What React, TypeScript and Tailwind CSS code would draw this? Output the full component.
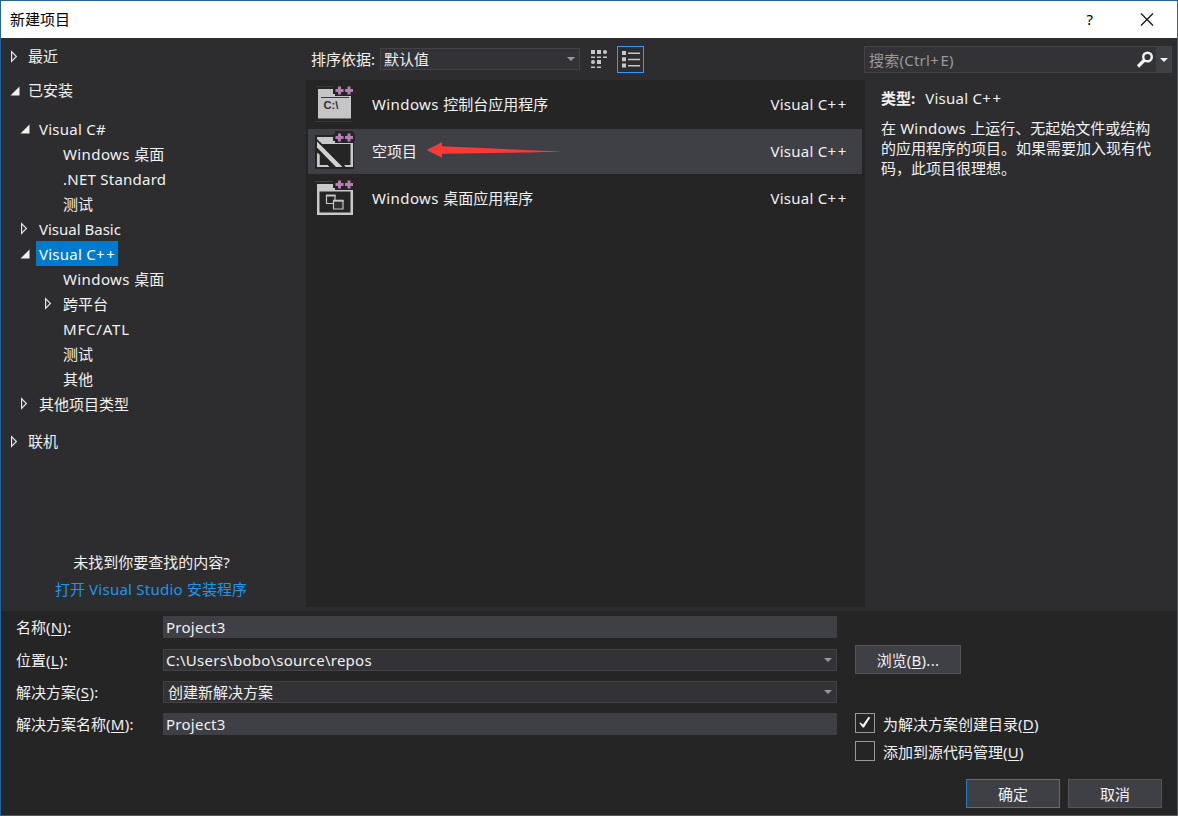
import type { ReactNode } from "react";

type Arrow = "open" | "closed" | "none";

type TreeItem = {
  label: string;
  arrow: Arrow;
  indent: string;
  selected?: boolean;
};

const treeItems: TreeItem[] = [
  { label: "Visual C#", arrow: "open", indent: "pl-[17px]" },
  { label: "Windows 桌面", arrow: "none", indent: "pl-[41px]" },
  { label: ".NET Standard", arrow: "none", indent: "pl-[41px]" },
  { label: "测试", arrow: "none", indent: "pl-[41px]" },
  { label: "Visual Basic", arrow: "closed", indent: "pl-[17px]" },
  { label: "Visual C++", arrow: "open", indent: "pl-[17px]", selected: true },
  { label: "Windows 桌面", arrow: "none", indent: "pl-[41px]" },
  { label: "跨平台", arrow: "closed", indent: "pl-[41px]" },
  { label: "MFC/ATL", arrow: "none", indent: "pl-[41px]" },
  { label: "测试", arrow: "none", indent: "pl-[41px]" },
  { label: "其他", arrow: "none", indent: "pl-[41px]" },
  { label: "其他项目类型", arrow: "closed", indent: "pl-[17px]" },
];

const templates = [
  { name: "Windows 控制台应用程序", icon: <ConsoleIcon /> },
  { name: "空项目", icon: <EmptyIcon />, selected: true },
  { name: "Windows 桌面应用程序", icon: <DesktopIcon /> },
];

function tracking(run: string) {
  if (run.startsWith("+")) return "tracking-[1.7px]";
  if (run === "MFC/ATL") return "tracking-[0.8px]";
  if (run === "Visual Basic") return "tracking-[0px]";
  if (run.startsWith("Windows")) return "tracking-[0.4px]";
  if (/[\x21-\x7e]/.test(run)) return "tracking-[0.25px]";
  return "";
}

// Latin runs get a touch of tracking, Chinese runs stay on the em grid
function Label({ children }: { children: string }) {
  const runs = children.match(/\++|[\x20-\x2a\x2c-\x7e]+|[^\x20-\x7e]+/g) ?? [];
  return (
    <span className="whitespace-pre">
      {runs.map((run, i) => (
        <span key={i} className={tracking(run)}>
          {run}
        </span>
      ))}
    </span>
  );
}

function Mnemonic({ text, letter, tail = "" }: { text: string; letter: string; tail?: string }) {
  return (
    <span className="whitespace-pre">
      {text}
      <span className="tracking-[0.3px]">
        (<span className="underline decoration-1 underline-offset-2">{letter}</span>){tail}
      </span>
    </span>
  );
}

function TreeArrow({ type }: { type: Arrow }) {
  return (
    <svg width="12" height="14" viewBox="0 0 12 14" className="shrink-0">
      {type === "open" && <path d="M11.5 2.5v9H2.5z" fill="#f1f1f1" />}
      {type === "closed" && (
        <path d="M3.6 1.6v9.8L8.4 6.5z" fill="none" stroke="#e6e6e6" strokeWidth="1.2" />
      )}
    </svg>
  );
}

function Caret({ color = "#999999" }: { color?: string }) {
  return (
    <svg width="8" height="4" viewBox="0 0 8 4" className="shrink-0">
      <path d="M0 0h8L4 4z" fill={color} />
    </svg>
  );
}

function PlusPlus() {
  return (
    <>
      <path d="M25 2h18v3h2v7h-2v2H25v-2h-2V5h2z" fill="#252526" />
      <path
        d="M28 4.5h3V7h2.5v3H31v2.5h-3V10h-2.5V7H28zM37.5 4.5h3V7H43v3h-2.5v2.5h-3V10H35V7h2.5z"
        fill="#b57fb6"
      />
    </>
  );
}

function ConsoleIcon() {
  return (
    <svg width="48" height="45" viewBox="0 0 48 45">
      <path d="M8 7h17v6h16v23.5H8z" fill="#c5c5c8" />
      <path d="M11 15.5h28" stroke="#3c3c3f" />
      <path d="M6 4.5h17M5 39.5h37" stroke="#39393b" />
      <text x="13.5" y="27" fontSize="10" fontWeight="700" fontFamily="Liberation Sans" fill="#303033" textLength="15" lengthAdjust="spacingAndGlyphs">
        C:\
      </text>
      <PlusPlus />
    </svg>
  );
}

function EmptyIcon() {
  return (
    <svg width="48" height="45" viewBox="0 0 48 45">
      <path d="M5 6h20V3h19v37H5z" fill="#252526" />
      <path d="M7 8h18v5h18v25H7z" fill="#c9c9cc" />
      <path d="M9.5 15h31v21h-31z" fill="#252526" />
      <path d="M7 10l30 29H20L7 24z" fill="#252526" />
      <path d="M7 12.5L32.5 38H26L7 18.5z" fill="#d2d2d5" />
      <path d="M7 24v14h12.5L17 36H9.500V25z" fill="#c9c9cc" />
      <path d="M7 8h18v5H10z" fill="#c9c9cc" />
      <PlusPlus />
    </svg>
  );
}

function DesktopIcon() {
  return (
    <svg width="48" height="45" viewBox="0 0 48 45">
      <path d="M5 5.500h18" stroke="#444447" />
      <path d="M7 8h18v5h18v26H7z" fill="#c9c9cc" />
      <path d="M9.500 15.500h31v21h-31z" fill="#252526" />
      <path d="M16.500 19.500h8.500v8h-8.500z" fill="none" stroke="#c5c5c8" strokeWidth="1.2" />
      <path d="M16 19.500h9.500" stroke="#c5c5c8" strokeWidth="2" />
      <path d="M23.500 24.500h9.500v8.500h-9.500z" fill="#303033" stroke="#c5c5c8" strokeWidth="1.2" />
      <path d="M23 24.700h10.500" stroke="#c5c5c8" strokeWidth="2" />
      <PlusPlus />
    </svg>
  );
}

function TitleBar() {
  return (
    <header className="flex h-[37px] items-center bg-white pr-[23px] pl-[9px] text-black">
      <span className="grow pb-[2px]">新建项目</span>
      <span className="mr-[47px] pb-[2px]">?</span>
      <svg width="14" height="14" viewBox="0 0 14 14">
        <path d="M1 0.500l12 12M13 0.500l-12 12" stroke="#111" strokeWidth="1.2" />
      </svg>
    </header>
  );
}

function Root({ label, arrow }: { label: string; arrow: Arrow }) {
  return (
    <div className="flex h-[34px] items-center gap-[8px] pl-[7px]">
      <TreeArrow type={arrow} />
      <span className="pb-[2px]">{label}</span>
    </div>
  );
}

function Sidebar() {
  return (
    <nav className="flex w-[305px] shrink-0 flex-col pt-[2px]">
      <Root label="最近" arrow="closed" />
      <Root label="已安装" arrow="open" />
      <div className="pt-[8px]">
        {treeItems.map((item, i) => (
          <div key={i} className={`flex h-[25px] items-center gap-[6px] ${item.indent}`}>
            <TreeArrow type={item.arrow} />
            <span
              className={`flex h-[25px] items-center pr-[1px] pl-[3px] ${item.selected ? "bg-[#007acc] text-white" : ""}`}
            >
              <Label>{item.label}</Label>
            </span>
          </div>
        ))}
      </div>
      <div className="pt-[9px]">
        <Root label="联机" arrow="closed" />
      </div>
      <div className="mt-auto flex flex-col items-center pr-[4px] pb-[8px]">
        <span className="leading-[27px]">未找到你要查找的内容?</span>
        <a className="mr-[1px] leading-[27px] text-[#1c97ea]">
          <Label>打开 Visual Studio 安装程序</Label>
        </a>
      </div>
    </nav>
  );
}

function SortBar() {
  return (
    <div className="flex h-[42px] items-center pl-[5px]">
      <span className="w-[69px]">排序依据:</span>
      <div className="flex h-[22px] w-[200px] items-center justify-between border border-[#434346] bg-[#333337] pr-[4px] pl-[3px]">
        <span>默认值</span>
        <Caret />
      </div>
      <svg width="18" height="20" viewBox="0 0 18 20" className="ml-[10px]" fill="#c8c8c8">
        <path d="M1 1h4v4H1zM7 1h4v4H7zM1 7.500h4v1.400H1zM7 7.500h4v1.400H7zM13 7.500h4v1.400h-4zM7 11h4v4H7zM1 17.500h4v1.400H1zM7 17.500h4v1.400H7z" />
        <circle cx="15" cy="3" r="2" />
        <circle cx="3" cy="13" r="2" />
      </svg>
      <div className="ml-[9px] flex h-[27px] w-[27px] items-center justify-center border border-[#3399ff]">
        <svg width="18" height="17" viewBox="0 0 18 17" fill="#c8c8c8">
          <path d="M0 0h4v4H0zM0 6.300h4v4H0zM0 12.600h4v4H0zM6 1.500h12v1.400H6zM6 7.800h12v1.400H6zM6 14h12v1.400H6z" />
        </svg>
      </div>
    </div>
  );
}

function TemplateList() {
  return (
    <section className="flex w-[559px] shrink-0 flex-col">
      <SortBar />
      <ul className="relative h-[527px] bg-[#252526] pt-[2px] pr-[3px] pl-[2px]">
        {templates.map((t) => (
          <li
            key={t.name}
            className={`mb-[2px] flex h-[45px] items-center pr-[14px] pl-[2px] ${t.selected ? "bg-[#3f3f46]" : ""}`}
          >
            {t.icon}
            <span className="ml-[14px] grow pb-[2px]">
              <Label>{t.name}</Label>
            </span>
            <span className="pb-[2px]">
              <Label>Visual C++</Label>
            </span>
          </li>
        ))}
        {/* pointer drawn over the selected row */}
        <svg width="138" height="18" viewBox="0 0 138 18" className="absolute top-[62px] left-[120px]">
          <path d="M0.5 8L16 0.200v4C60 6 105 8.600 136 9.500 105 10.600 60 11.200 16 11.800v4z" fill="#f93a37" />
        </svg>
      </ul>
    </section>
  );
}

function Details() {
  return (
    <aside className="grow">
      <div className="mt-[8px] mr-[5px] ml-[-1px] flex h-[27px] border border-[#434346] bg-[#333337]">
        <div className="flex grow items-center justify-between pr-[2px] pl-[4px] text-[#999999]">
          <span className="tracking-[0.2px]">
            <Label>搜索(Ctrl+E)</Label>
          </span>
          <svg width="18" height="18" viewBox="0 0 18 18">
            <circle cx="11.500" cy="6" r="4.300" fill="none" stroke="#f1f1f1" strokeWidth="2.400" />
            <path d="M8.500 9L2 15.500" stroke="#f1f1f1" strokeWidth="3.200" />
          </svg>
        </div>
        <div className="flex w-[15px] items-center justify-center bg-[#3f3f46]">
          <Caret color="#f1f1f1" />
        </div>
      </div>
      <div className="pt-[14px] pl-[16px]">
        <p className="leading-[22px]">
          <span className="mr-[10px] font-bold">类型:</span>
          <Label>Visual C++</Label>
        </p>
        <p className="mt-[9px] w-[280px] leading-[20px]">
          <Label>在 Windows 上运行、无起始文件或结构</Label>
          <br />
          的应用程序的项目。如果需要加入现有代
          <br />
          码，此项目很理想。
        </p>
      </div>
    </aside>
  );
}

function Field({ label, value, combo, inset = "pl-[2px]" }: { label: ReactNode; value: string; combo?: boolean; inset?: string }) {
  return (
    <div className="flex items-center">
      <span className="w-[147px]">{label}</span>
      <div
        className={`flex h-[22px] w-[674px] items-center justify-between border pr-[4px] ${inset} ${combo ? "border-[#434346] bg-[#333337]" : "border-[#3f3f46] bg-[#3f3f46]"}`}
      >
        <Label>{value}</Label>
        {combo && <Caret />}
      </div>
    </div>
  );
}

function Check({ label, letter, checked }: { label: string; letter: string; checked?: boolean }) {
  return (
    <div className="flex h-[28px] items-center gap-[8px]">
      <span className="flex h-[20px] w-[20px] items-center justify-center border border-[#999999]">
        {checked && (
          <svg width="14" height="14" viewBox="0 0 14 14">
            <path d="M2 6.200l3 2.200L10.500 0.800l1.800 0.600L6 11.500H4.600L1.500 7.200z" fill="#f1f1f1" />
          </svg>
        )}
      </span>
      <span className="pt-[2px]">
        <Mnemonic text={label} letter={letter} />
      </span>
    </div>
  );
}

function Footer() {
  return (
    <footer className="flex h-[204px] bg-[#252526] pl-[15px]">
      <div className="flex flex-col pt-[5px]">
        <Field label={<Mnemonic text="名称" letter="N" tail=":" />} value="Project3" />
        <div className="h-[11px]" />
        <Field label={<Mnemonic text="位置" letter="L" tail=":" />} value="C:\Users\bobo\source\repos" combo />
        <div className="h-[10px]" />
        <Field label={<Mnemonic text="解决方案" letter="S" tail=":" />} value="创建新解决方案" combo inset="pl-[4px]" />
        <div className="h-[10px]" />
        <Field label={<Mnemonic text="解决方案名称" letter="M" tail=":" />} value="Project3" />
      </div>
      <div className="flex grow flex-col pt-[34px] pl-[18px]">
        <button className="h-[29px] w-[106px] border border-[#555555] bg-[#3f3f46]">
          <Mnemonic text="浏览" letter="B" tail="..." />
        </button>
        <div className="pt-[35px]">
          <Check label="为解决方案创建目录" letter="D" checked />
          <Check label="添加到源代码管理" letter="U" />
        </div>
        <div className="flex justify-end gap-[8px] pt-[14px] pr-[15px]">
          <button className="h-[29px] w-[94px] border border-[#1c7fc8] bg-[#3f3f46]">确定</button>
          <button className="h-[29px] w-[94px] border border-[#555555] bg-[#3f3f46]">取消</button>
        </div>
      </div>
    </footer>
  );
}

export default function App() {
  return (
    <div className="h-[816px] w-[1178px] overflow-hidden border border-[#2a6496] bg-[#2d2d30] font-['Noto_Sans','Noto_Sans_CJK_SC',sans-serif] text-[15px] leading-[20px] text-[#f1f1f1]">
      <TitleBar />
      <main className="flex h-[573px]">
        <Sidebar />
        <TemplateList />
        <Details />
      </main>
      <Footer />
    </div>
  );
}
